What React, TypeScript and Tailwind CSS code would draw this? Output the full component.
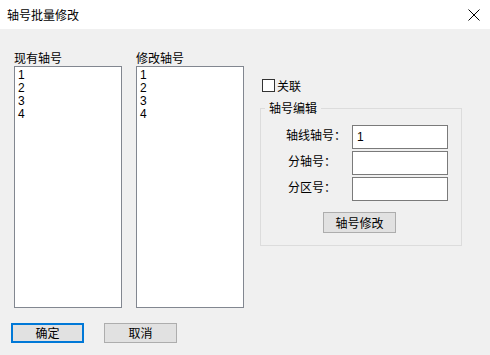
import React from "react";

const cjk = { fontFamily: '"Noto Sans CJK SC", "Noto Sans", sans-serif' };
const lat = { fontFamily: '"Liberation Sans", "Noto Sans CJK SC", sans-serif' };

function ListBox() {
  return (
    <div className="h-[242px] w-[108px] border border-[#828790] bg-white pl-[3px] pt-[2px] text-[12px] leading-[13px] text-black" style={lat}>
      <div>1</div>
      <div>2</div>
      <div>3</div>
      <div>4</div>
    </div>
  );
}

function Row({ label, value, indent }: { label: string; value?: string; indent?: boolean }) {
  return (
    <div className="flex items-start">
      <div className={"mt-[2px] w-[66px] text-[12px] leading-[16px] " + (indent ? "pl-[2px]" : "")}>{label}</div>
      <div className="h-[24px] w-[96px] border border-[#7a7a7a] bg-white pl-[4px] pt-[4px] text-[12px] leading-[14px]" style={lat}>
        {value}
      </div>
    </div>
  );
}

export default function App() {
  return (
    <div className="flex h-[355px] w-[490px] flex-col bg-[#f0f0f0] text-black" style={cjk}>
      <div className="flex h-[29px] items-center justify-between bg-white pl-[7px] pr-[10px]">
        <span className="text-[12px] leading-[16px]">轴号批量修改</span>
        <svg width="12" height="12" viewBox="0 0 12 12" className="mr-[0px]">
          <path d="M0.5 0.5 L11.5 11.5 M11.5 0.5 L0.5 11.5" stroke="#000" strokeWidth="1" fill="none" />
        </svg>
      </div>

      <div className="ml-[14px] mt-[21px] flex items-start">
        <div className="flex w-[108px] flex-col">
          <div className="h-[16px] text-[12px] leading-[16px]">现有轴号</div>
          <ListBox />
        </div>
        <div className="ml-[14px] flex w-[108px] flex-col">
          <div className="h-[16px] text-[12px] leading-[16px]">修改轴号</div>
          <ListBox />
        </div>
        <div className="ml-[16px] flex w-[202px] flex-col">
          <div className="ml-[2px] mt-[29px] flex items-center">
            <div className="h-[13px] w-[13px] border border-[#333333] bg-white" />
            <span className="ml-[2px] text-[12px] leading-[13px]">关联</span>
          </div>
          <fieldset className="m-0 mt-[10px] border border-[#dcdcdc] p-0">
            <legend className="ml-[4px] px-[4px] text-[12px] leading-[12px]">轴号编辑</legend>
            <div className="flex flex-col gap-[2px] pb-[12px] pl-[25px] pt-[11px]">
              <Row label="轴线轴号：" value="1" />
              <Row label="分轴号：" indent />
              <Row label="分区号：" indent />
              <div className="ml-[37px] mt-[9px] flex h-[21px] w-[73px] items-center justify-center border border-[#adadad] bg-[#e1e1e1] text-[12px] leading-[14px]">
                轴号修改
              </div>
            </div>
          </fieldset>
        </div>
      </div>

      <div className="ml-[11px] mt-[15px] flex">
        <div className="flex h-[20px] w-[73px] items-center justify-center border-2 border-[#0078d7] bg-[#e1e1e1] text-[12px] leading-[14px]">
          确定
        </div>
        <div className="ml-[20px] flex h-[20px] w-[73px] items-center justify-center border border-[#adadad] bg-[#e1e1e1] text-[12px] leading-[14px]">
          取消
        </div>
      </div>
    </div>
  );
}
